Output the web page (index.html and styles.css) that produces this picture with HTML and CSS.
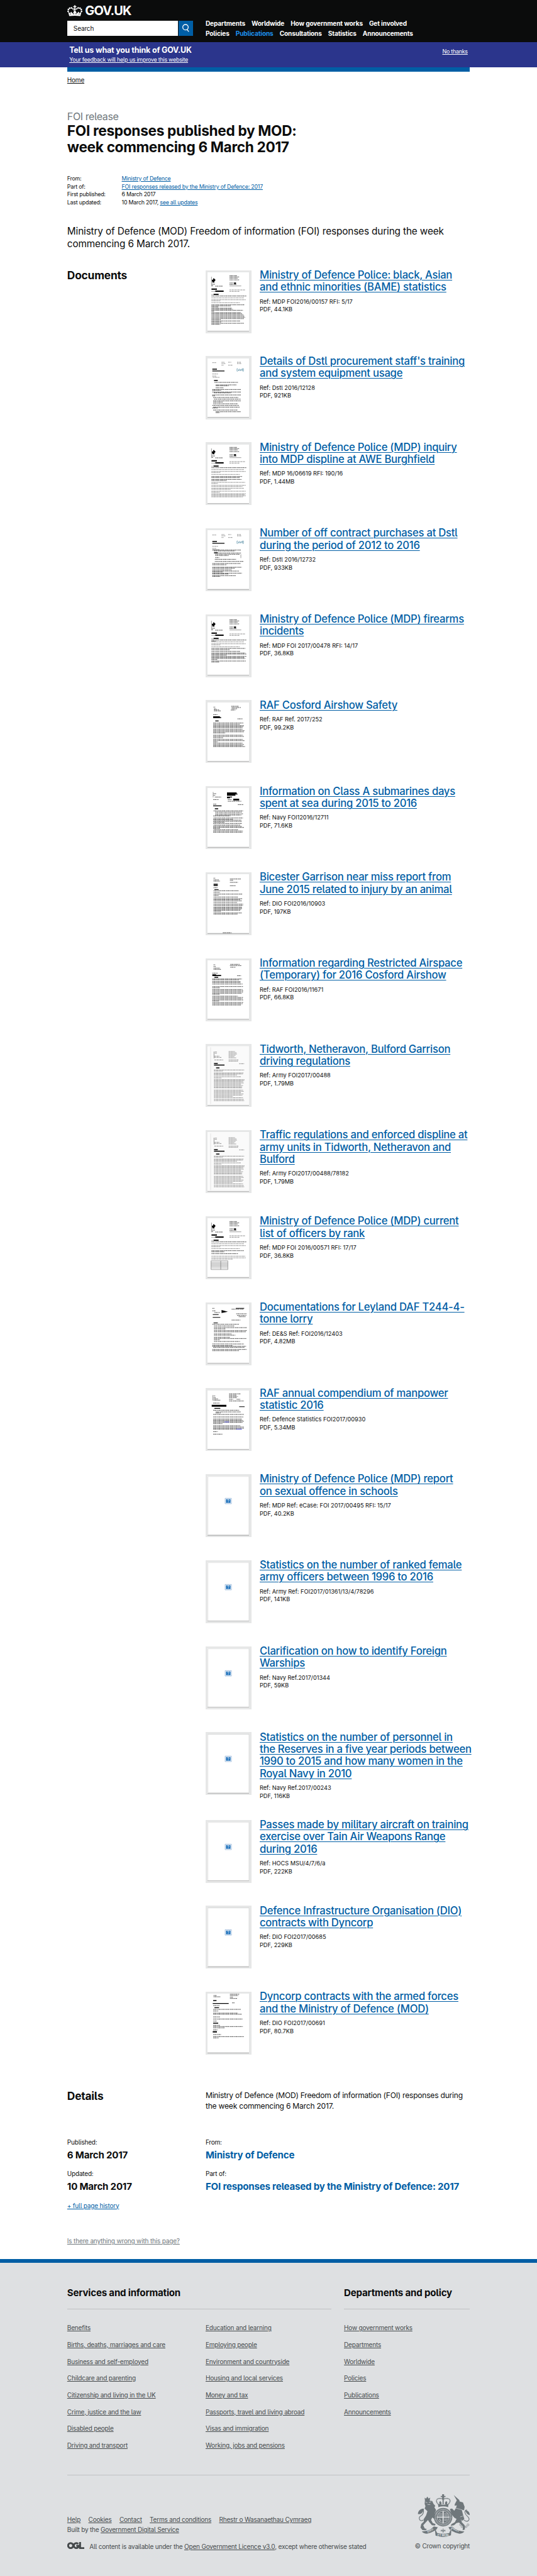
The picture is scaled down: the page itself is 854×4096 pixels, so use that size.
FILE: index.html
```html
<!DOCTYPE html>
<html lang="en">
<head>
<meta charset="utf-8">
<title>FOI responses published by MOD: week commencing 6 March 2017 - GOV.UK</title>
<link rel="stylesheet" href="styles.css">
</head>
<body>
<svg class="defs" aria-hidden="true">
  <symbol id="mdp" viewBox="0 0 99 140">
    <path class="line" d="M9 10V33"/>
    <path class="solid" d="M13 14h3v2h2v4h-2v4h-5v-3h-1v-4h3z"/>
    <path class="bold" d="M10 28H17M10 31.5H13M18 32.5H36M52 7.5H70M52 10.5H75M52 13.5H72M52 17.5H75M52 25H67M52 28.500H68"/>
    <path class="line" d="M52 32H80"/>
    <path class="solid" d="M63 24h4.500v3.500h-4.500zM9 38h13v3h-13zM18 43h20v3h-20zM14 51h12v2.500h-12z"/>
    <path class="text" d="M9 45H18M9 52.500H14M52 41.500H89M52 45H76"/>
    <path class="bold" d="M9 56H92"/>
    <path class="text" d="M9 60.500H86M9 65H91M9 67.500H30M9 72H77"/>
  </symbol>
  <symbol id="dstl" viewBox="0 0 99 140">
    <path class="text" d="M11 11H20M33 10H40M33 13H42M49 10H56M70 10H79M70 13H80M33 17H38M49 17H59M11 38H25M11 43H20M12 46H28"/>
    <path class="solid" d="M11 25.500h11v2h-11zM11 30h29v1.600h-29zM15 52.500h9v2h-9z"/>
    <path class="blue" d="M71 25H70V31.500H71M84 25H85V31.500H84M73.500 27.500V30H75V25.500M78 27V30H79M80 26V30M82.500 25V30.500"/>
  </symbol>
  <symbol id="army" viewBox="0 0 99 140">
    <path class="scan" d="M0 0H99V140H0z"/><path class="edge" d="M7 3V138"/>
    <path class="line" d="M15 13V29"/>
    <path class="text" d="M17 14H22M17 17H22M16 24H28M16 27H33M50 13H65M50 16H69M50 19H70M50 22H66M50 25H64M50 28H68M16 33H37M50 33H73M50 36H72M75 42H87"/>
    <path class="solid" d="M15 40.500h9v2h-9zM15 44h25v2.500h-25zM20 51h8v2h-8z"/>
    <path class="text" d="M15 57H87M15 59.500H36M15 64H85M15 66.500H84M15 69H70M15 73H79M15 76H33M15 80H88M15 82.500H87M15 85H84M15 88H86M15 91H80M15 94H84M15 97H82M15 99.500H82M15 105H84M15 108H86M15 111H80M15 114H85M15 117H83M15 120H60M15 123H84M15 127H86M15 130H87"/>
  </symbol>
  <symbol id="missing" viewBox="0 0 99 140">
    <path class="frame" d="M.5 .5H98.500V139.500H.5z"/>
    <path class="icon-edge" d="M41.500 52.500H56.500V65.500H41.500z"/><path class="icon-fill" d="M43.500 54.500H54.500V63.500H43.500z"/>
    <path class="icon-mark" d="M47 57.200C47 55.600 51.200 55.600 51 57.700C50.900 58.800 49 58.800 49 60.200M49 61.300V62.500"/>
  </symbol>
</svg>

<header class="header">
  <div class="wrap">
    <a class="logo">
      <svg class="crown" viewBox="30 24 108 79">
        <path d="M44 102L36 70L50 82L58 70L68 84L78 68V58H74V63H90V58H90V68L100 84L110 70L118 82L132 70L124 102Q84 96 44 102z"/>
        <path class="cut" d="M49 88L54 84L58 90zM119 88L114 84L110 90zM73 78V89H78V80zM95 78V89H90V80z"/>
        <path d="M80 24H88L87 31H95V39H87L88 50H80L81 39H73V31H81z"/>
        <g><circle cx="84" cy="54" r="7"/><circle cx="36" cy="68" r="6"/><circle cx="38" cy="55" r="6"/><circle cx="47" cy="46" r="6"/><circle cx="60" cy="44" r="6"/><circle cx="71" cy="51" r="5"/><circle cx="97" cy="51" r="5"/><circle cx="108" cy="44" r="6"/><circle cx="121" cy="46" r="6"/><circle cx="130" cy="55" r="6"/><circle cx="132" cy="68" r="6"/></g>
      </svg>
      <span>GOV.UK</span>
    </a>
    <div class="header-row">
      <div class="search"><span class="search-box">Search</span><span class="search-button"><svg viewBox="0 0 35 36"><circle cx="16.500" cy="15.500" r="6.500"/><path d="M20 21L24.500 26"/></svg></span></div>
      <nav class="nav">
        <div class="nav-line n1"><a>Departments</a><a>Worldwide</a><a>How government works</a><a>Get involved</a></div>
        <div class="nav-line n2"><a>Policies</a><a class="active">Publications</a><a>Consultations</a><a>Statistics</a><a>Announcements</a></div>
      </nav>
    </div>
  </div>
</header>

<section class="survey">
  <div class="wrap survey-row">
    <div><p class="survey-title">Tell us what you think of GOV.UK</p><a class="survey-link">Your feedback will help us improve this website</a></div>
    <a class="survey-link no-thanks">No thanks</a>
  </div>
</section>

<main class="wrap main">
  <div class="bar"></div>
  <p class="crumb"><a>Home</a></p>
  <p class="kicker">FOI release</p>
  <h1>FOI responses published by MOD:<br>week commencing 6 March 2017</h1>
  <dl class="meta">
    <dt>From:</dt><dd><a>Ministry of Defence</a></dd>
    <dt>Part of:</dt><dd><a>FOI responses released by the Ministry of Defence: 2017</a></dd>
    <dt>First published:</dt><dd>6 March 2017</dd>
    <dt>Last updated:</dt><dd>10 March 2017, <a>see all updates</a></dd>
  </dl>
  <p class="lead">Ministry of Defence (MOD) Freedom of information (FOI) responses during the week<br>commencing 6 March 2017.</p>

  <section class="columns documents">
    <h2>Documents</h2>
    <div>
      <article class="doc">
        <svg class="thumb" viewBox="0 0 99 140"><use href="#mdp"/><path class="bold" d="M9 77H88M9 79.500H55M9 82H25M9 85H57M9 87.500H60M9 90H84M9 92.500H15M9 95.500H80M9 98H82M9 101H85M9 104H88M9 107H89M9 110H86M9 112.500H31M9 115.500H77M9 118H32M9 121H86M9 123.500H30"/></svg>
        <div><h3>Ministry of Defence Police: black, Asian<br>and ethnic minorities (BAME) statistics</h3><p>Ref: MDP FOI2016/00157 RFI: 5/17<br>PDF, 44.1KB</p></div>
      </article>
      <article class="doc">
        <svg class="thumb" viewBox="0 0 99 140"><use href="#dstl"/><path class="bold" d="M16 58H72M19 64H69M19 66H50M19 71H38M11 75H79M11 77H32M11 81H79M15 83H56M11 88H79M11 90H17M13 94H73M15 98H79M13 102H79M13 105H36M13 109H72M11 113H75M13 117H76M11 119H24M13 124H71M19 128H79M19 130H29"/></svg>
        <div><h3>Details of Dstl procurement staff's training<br>and system equipment usage</h3><p>Ref: Dstl 2016/12128<br>PDF, 921KB</p></div>
      </article>
      <article class="doc">
        <svg class="thumb" viewBox="0 0 99 140"><use href="#mdp"/><path class="bold" d="M9 77H82M9 79.500H76M9 84H81M9 86.500H45"/><path class="text" d="M9 91H90M9 93.500H24M9 98H91M9 101H83M9 105H86M9 107.500H55M9 112H91M9 114.500H29M9 118H91M9 120.500H89M9 123H91M9 125.500H84"/></svg>
        <div><h3>Ministry of Defence Police (MDP) inquiry<br>into MDP displine at AWE Burghfield</h3><p>Ref: MDP 16/06619 RFI: 190/16<br>PDF, 1.44MB</p></div>
      </article>
      <article class="doc">
        <svg class="thumb" viewBox="0 0 99 140"><use href="#dstl"/><path class="bold" d="M11 47H79M15 49H65M16 54H80M18 57H76M18 60H50M18 65H28M17 69H68M17 74H85M11 79H78M11 82H45M11 88H81M11 90H65M11 94H57M11 97H75M11 99H36M11 102H82M11 104H50M11 108H67M11 109.500H30"/><path class="line" d="M79 57V66"/></svg>
        <div><h3>Number of off contract purchases at Dstl<br>during the period of 2012 to 2016</h3><p>Ref: Dstl 2016/12732<br>PDF, 933KB</p></div>
      </article>
      <article class="doc">
        <svg class="thumb" viewBox="0 0 99 140"><use href="#mdp"/><path class="bold" d="M9 58.500H20M9 76H90M9 79H52M9 83H77M9 87H90M9 89.500H92M9 92H45M9 95H92M9 97.500H88M9 100H90M9 102.500H23M9 106H91M9 108.500H28"/></svg>
        <div><h3>Ministry of Defence Police (MDP) firearms<br>incidents</h3><p>Ref: MDP FOI 2017/00478 RFI: 14/17<br>PDF, 36.8KB</p></div>
      </article>
      <article class="doc">
        <svg class="thumb" viewBox="0 0 99 140"><path class="bold" d="M14 12H18M15 16H20M15 18.500H27M15 21H31M56 10H74M57 13H79M57 16H70M55 19H66M13 30H24M71 40H83M13 50H85M13 53H77M13 56H86M13 58.500H85M13 61H83M13 65H83M13 68H88M13 71H86M13 73.500H42M13 79H84M13 82H86M13 85H37M13 89H84M13 92H88M13 95H24M13 98H83M13 101H86M13 104H84M13 106H89"/><path class="solid" d="M13 34h16v2h3v2h-19zM18 44h8v2h-8z"/></svg>
        <div><h3>RAF Cosford Airshow Safety</h3><p>Ref: RAF Ref. 2017/252<br>PDF, 99.2KB</p></div>
      </article>
      <article class="doc">
        <svg class="thumb" viewBox="0 0 99 140"><path class="line" d="M13 9V22"/><path class="solid" d="M46 10h23v3h2v2h-5v3h-20zM46 20h12v2h-5v2h-7zM61 25h14v4h-14zM13 41h20v1.800h-20zM17 48h8v2h-8z"/><path class="bold" d="M14 13H20M14 17H18M17 21H32M13 27H26M48 27H58M48 31H80M72 39H85M13 38H21M14 54H85M18 57H81M18 61H84M18 64H80M13 66H54M14 71H84M13 74H60M14 76H80M13 79H81M14 81H40M13 84H82M14 88H78M13 91H82M13 93.500H87M13 96H29M14 99H73M13 102H84M13 105H83"/></svg>
        <div><h3>Information on Class A submarines days<br>spent at sea during 2015 to 2016</h3><p>Ref: Navy FOI12016/12711<br>PDF, 71.6KB</p></div>
      </article>
      <article class="doc">
        <svg class="thumb" viewBox="0 0 99 140"><path class="solid" d="M14 22.500h10v2h-10zM14 25.500h10v2h-10zM16 35.500h10v1.500h-10z"/><path class="bold" d="M14 9H18M14 13H27M14 16H29M53 11H79M53 14H61M53 19H72M53 27H67M14 32H24M14 39H74M14 43H29M14 47H83M14 50H26M14 54H72M14 58H83M14 60H77M14 63H81M14 67H70M14 71H85M14 74H84M14 78H81M14 80.500H82M14 83H80M14 85.500H78M14 88H32M14 92H81M14 94.500H71M36 139H57"/></svg>
        <div><h3>Bicester Garrison near miss report from<br>June 2015 related to injury by an animal</h3><p>Ref: DIO FOI2016/10903<br>PDF, 197KB</p></div>
      </article>
      <article class="doc">
        <svg class="thumb" viewBox="0 0 99 140"><path class="solid" d="M11 33h9v1.500h12v2.500h-21zM16 39h9v2h-9z"/><path class="bold" d="M14 10H18M14 14H19M14 18H29M14 21H32M54 9H76M53 12H80M54 16H66M11 30H24M70 36H80M11 44H82M11 46H75M11 50H78M11 52.500H78M11 56H83M11 62H84M11 65H29M11 69H83M11 72H85M11 75H84M11 78H82M11 80.500H28M11 85H72M11 88H84M11 91H83M11 94H85M11 96.500H27M11 100H85M11 103H83M11 106H80"/></svg>
        <div><h3>Information regarding Restricted Airspace<br>(Temporary) for 2016 Cosford Airshow</h3><p>Ref: RAF FOI2016/11671<br>PDF, 66.8KB</p></div>
      </article>
      <article class="doc">
        <svg class="thumb" viewBox="0 0 99 140"><use href="#army"/></svg>
        <div><h3>Tidworth, Netheravon, Bulford Garrison<br>driving regulations</h3><p>Ref: Army FOI2017/00488<br>PDF, 1.79MB</p></div>
      </article>
      <article class="doc">
        <svg class="thumb" viewBox="0 0 99 140"><use href="#army"/></svg>
        <div><h3>Traffic regulations and enforced displine at<br>army units in Tidworth, Netheravon and<br>Bulford</h3><p>Ref: Army FOI2017/00488/78182<br>PDF, 1.79MB</p></div>
      </article>
      <article class="doc">
        <svg class="thumb" viewBox="0 0 99 140"><use href="#mdp"/><path class="bold" d="M9 77H86M9 79.500H40M9 84H72"/><path class="text" d="M9 90H90M9 94H91M9 97H60"/><path class="grid" d="M8 101H48V122H8zM31 101V122M8 104.500H48M8 108H48M8 111H48M8 114H48M8 118H48"/></svg>
        <div><h3>Ministry of Defence Police (MDP) current<br>list of officers by rank</h3><p>Ref: MDP FOI 2016/00571 RFI: 17/17<br>PDF, 36.8KB</p></div>
      </article>
      <article class="doc">
        <svg class="thumb" viewBox="0 0 99 140"><path class="solid" d="M33 13L48 17L33 20zM67 8h20v1.500h-20zM12 23h14v1.500h-14zM12 30h18v1.500h-18zM14 43h10v1.300h-10z"/><path class="bold" d="M11 9H16M11 15H19M16 19H29M57 11H86M68 22H93M70 26H92M74 29H90M57 37H78M11 47H75M15 51H64M15 55H93M15 58H42M15 62H93M15 65H91M15 70H57M15 73H66M15 78H53M15 81H92M15 84H29M15 88H77M11 94H86M11 98H60M11 99.500H92M13 102H88M11 107H93M11 110H75"/></svg>
        <div><h3>Documentations for Leyland DAF T244-4-<br>tonne lorry</h3><p>Ref: DE&amp;S Ref: FOI2016/12403<br>PDF, 4.82MB</p></div>
      </article>
      <article class="doc">
        <svg class="thumb" viewBox="0 0 99 140"><path class="line" d="M12 12V25"/><path class="solid" d="M9.500 35h35v4.500h-35zM16 42.500h14v2h-14zM75 39h13v1.500h-13z"/><path class="bold" d="M14 14H18M14 18H19M14 21H25M14 24H30M51 9H78M51 12H69M51 15H72M51 18H70M51 22H61M69 22H78M51 26H86M13 31H28M13 48H75M19 52H79M19 54.500H31M13 58H86M13 64H85M13 69H81M13 72H84M13 74.500H86M13 77H83M13 80H35M13 85H78M13 88H86M13 91H87M13 93H80M13 99H24M13 105H35"/><path class="link-line" d="M40 76H51M68 93H82"/></svg>
        <div><h3>RAF annual compendium of manpower<br>statistic 2016</h3><p>Ref: Defence Statistics FOI2017/00930<br>PDF, 5.34MB</p></div>
      </article>
      <article class="doc">
        <svg class="thumb" viewBox="0 0 99 140"><use href="#missing"/></svg>
        <div><h3>Ministry of Defence Police (MDP) report<br>on sexual offence in schools</h3><p>Ref: MDP Ref: eCase: FOI 2017/00495 RFI: 15/17<br>PDF, 40.2KB</p></div>
      </article>
      <article class="doc">
        <svg class="thumb" viewBox="0 0 99 140"><use href="#missing"/></svg>
        <div><h3>Statistics on the number of ranked female<br>army officers between 1996 to 2016</h3><p>Ref: Army Ref: FOI2017/01361/13/4/78296<br>PDF, 141KB</p></div>
      </article>
      <article class="doc">
        <svg class="thumb" viewBox="0 0 99 140"><use href="#missing"/></svg>
        <div><h3>Clarification on how to identify Foreign<br>Warships</h3><p>Ref: Navy Ref.2017/01344<br>PDF, 59KB</p></div>
      </article>
      <article class="doc tall">
        <svg class="thumb" viewBox="0 0 99 140"><use href="#missing"/></svg>
        <div><h3>Statistics on the number of personnel in<br>the Reserves in a five year periods between<br>1990 to 2015 and how many women in the<br>Royal Navy in 2010</h3><p>Ref: Navy Ref.2017/00243<br>PDF, 116KB</p></div>
      </article>
      <article class="doc">
        <svg class="thumb" viewBox="0 0 99 140"><use href="#missing"/></svg>
        <div><h3>Passes made by military aircraft on training<br>exercise over Tain Air Weapons Range<br>during 2016</h3><p>Ref: HOCS MSU/4/7/6/a<br>PDF, 222KB</p></div>
      </article>
      <article class="doc">
        <svg class="thumb" viewBox="0 0 99 140"><use href="#missing"/></svg>
        <div><h3>Defence Infrastructure Organisation (DIO)<br>contracts with Dyncorp</h3><p>Ref: DIO FOI2017/00685<br>PDF, 229KB</p></div>
      </article>
      <article class="doc">
        <svg class="thumb" viewBox="0 0 99 140"><path class="solid" d="M13 15h8v2h-8zM12 22h38v2h-38zM16 32h11v2h-11zM13 69h12v2h-12zM12 89h10v3h-10z"/><path class="bold" d="M14 4H21M14 7H30M53 1H75M53 4H73M53 8H60M53 11H70M58 21.500H64M13 28H28M13 37H79M13 41H25M13 46H72M13 48.500H81M13 55H29M13 60H83M13 65H22M13 75H29M13 78H84M13 81H40M13 86H24M13 97H32M13 102H86M13 105H26"/></svg>
        <div><h3>Dyncorp contracts with the armed forces<br>and the Ministry of Defence (MOD)</h3><p>Ref: DIO FOI2017/00691<br>PDF, 80.7KB</p></div>
      </article>
    </div>
  </section>

  <section class="columns details">
    <h2>Details</h2>
    <p class="body">Ministry of Defence (MOD) Freedom of information (FOI) responses during<br>the week commencing 6 March 2017.</p>
  </section>

  <section class="facts">
    <div class="fact"><p>Published:</p><strong>6 March 2017</strong></div>
    <div class="fact"><p>From:</p><strong><a>Ministry of Defence</a></strong></div>
    <div class="fact"><p>Updated:</p><strong>10 March 2017</strong></div>
    <div class="fact"><p>Part of:</p><strong><a>FOI responses released by the Ministry of Defence: 2017</a></strong></div>
  </section>
  <p class="history"><a>+ full page history</a></p>
  <p class="report"><a>Is there anything wrong with this page?</a></p>
</main>

<footer class="footer">
  <div class="wrap">
    <div class="footer-top">
      <section>
        <h2>Services and information</h2>
        <div class="footer-links two">
          <ul><li><a>Benefits</a></li><li><a>Births, deaths, marriages and care</a></li><li><a>Business and self-employed</a></li><li><a>Childcare and parenting</a></li><li><a>Citizenship and living in the UK</a></li><li><a>Crime, justice and the law</a></li><li><a>Disabled people</a></li><li><a>Driving and transport</a></li></ul>
          <ul><li><a>Education and learning</a></li><li><a>Employing people</a></li><li><a>Environment and countryside</a></li><li><a>Housing and local services</a></li><li><a>Money and tax</a></li><li><a>Passports, travel and living abroad</a></li><li><a>Visas and immigration</a></li><li><a>Working, jobs and pensions</a></li></ul>
        </div>
      </section>
      <section>
        <h2>Departments and policy</h2>
        <div class="footer-links">
          <ul><li><a>How government works</a></li><li><a>Departments</a></li><li><a>Worldwide</a></li><li><a>Policies</a></li><li><a>Publications</a></li><li><a>Announcements</a></li></ul>
        </div>
      </section>
    </div>
    <div class="footer-bottom">
      <div>
        <div class="legal"><a>Help</a><a>Cookies</a><a>Contact</a><a>Terms and conditions</a><a>Rhestr o Wasanaethau Cymraeg</a></div>
        <p>Built by the <a>Government Digital Service</a></p>
        <div class="licence">
          <svg class="ogl" viewBox="0 0 41 17"><circle cx="8" cy="8.500" r="6"/><path d="M26 4.500A6 6 0 1 0 26 12.500V9H21.500M30.500 0V14.500H41"/></svg>
          <p>All content is available under the <a>Open Government Licence v3.0</a>, except where otherwise stated</p>
        </div>
      </div>
      <div class="crown-copyright">
        <svg class="crest" viewBox="165 78 375 306">
          <path d="M218 122L216 103L226 110L235 95L245 110L256 102L252 124L270 126L280 148L292 160L286 172L298 190L288 214L286 236L302 250L286 256L270 244L262 262L274 284L294 292L290 302L268 300L248 276L240 262L222 282L206 300L216 322L232 328L222 336L200 334L186 316L192 290L210 274L208 258L226 230L236 200L216 180L222 164L216 148z"/>
          <path class="stroke" d="M206 262C178 280 168 244 190 232C212 218 214 186 196 184"/><path d="M212 182C188 178 168 196 168 220C192 224 204 206 206 196z"/>
          <path d="M424 84L464 120L466 130L490 136L502 168L498 192L482 190L492 230L500 256L478 274L502 300L504 330L488 336L490 308L462 280L444 284L426 300L402 304L408 292L432 278L444 254L428 246L410 224L396 184L412 180L428 196L440 176L446 158L430 160L432 148L446 122z"/>
          <path class="stroke" d="M496 262C528 286 546 256 522 236C502 220 496 194 518 190"/><path d="M508 196C524 190 538 206 539 228C520 222 514 214 508 196z"/>
          <g class="chain"><circle cx="472" cy="296" r="6"/><circle cx="482" cy="310" r="6"/><circle cx="500" cy="312" r="6"/><circle cx="513" cy="310" r="6"/><circle cx="526" cy="297" r="7"/></g>
          <path class="light" d="M222 134L236 140M246 138L262 132M236 152L256 152M440 178L486 190M470 240L490 234M474 262L486 266"/>
          <circle cx="348" cy="242" r="66"/><circle class="garter" cx="348" cy="242" r="43"/>
          <circle class="beads" cx="348" cy="242" r="55"/>
          <path class="light-thick" d="M304 242H392M348 198V286"/>
          <path class="light" d="M314 218H342M312 228H342M356 218H382M356 228H384M356 256H382M356 266H376M320 256L338 272M326 252V276"/>
          <path d="M312 148L314 170Q348 160 384 170L386 148Q348 158 312 148zM341 78H355V90H365V98H355V110H341V98H331V90H341zM344 110H352V150H344zM322 150L320 134L328 126L336 138V150zM376 150L378 134L370 126L362 138V150z"/>
          <path class="dots" d="M316 152C286 124 306 106 326 108C340 108 346 114 348 118C350 114 358 108 370 108C394 106 412 124 382 152"/>
          <path d="M196 344Q248 342 282 308L310 314Q300 344 232 360Q208 358 196 344zM500 344Q448 342 414 308L386 314Q396 344 464 360Q488 358 500 344zM288 320L298 340L306 356Q348 364 392 356L398 340L408 320L404 372Q348 394 294 374z"/>
          <path class="stroke" d="M348 324V352M336 344C330 332 340 330 346 344M360 344C366 332 356 330 350 344"/>
          <text class="motto" x="348" y="379" text-anchor="middle">ET MON</text>
          <text class="motto" transform="translate(238 354) rotate(-28)">DIEU</text>
          <text class="motto" transform="translate(405 322) rotate(28)">DROIT</text>
        </svg>
        <p>© Crown copyright</p>
      </div>
    </div>
  </div>
</footer>
</body>
</html>
```
FILE: styles.css
```css
/* 1rem is one hundred design units */
html { font-size: 66.7px; }
* { box-sizing: border-box; margin: 0; padding: 0; }
body { font-family: Inter, "Liberation Sans", sans-serif; font-size: .16rem; color: #0b0c0c; background: #fff; font-feature-settings: "cv05"; white-space: nowrap; overflow-x: hidden; }
a { text-decoration-line: underline; text-decoration-thickness: 1px; text-underline-offset: .02rem; }
ul { list-style: none; }
h1, h2, h3 { font-weight: 700; }
.defs { display: none; }
.wrap { width: 9.6rem; margin: 0 auto; }

.header { height: 1.01rem; background: #0b0c0c; padding-top: .11rem; color: #fff; }
.header a, .facts a { text-decoration: none; }
.logo { display: flex; height: .3rem; font-size: .3rem; line-height: .3rem; font-weight: 700; gap: .065rem; letter-spacing: -.012rem; }
.crown { flex: none; width: .36rem; height: .27rem; fill: #fff; margin-top: .01rem; }
.crown .cut { fill: #0b0c0c; }
.header-row { display: flex; gap: .3rem; }
.search { display: flex; gap: .01rem; margin-top: .08rem; height: .37rem; }
.search-box { width: 2.64rem; background: #fff; color: #0b0c0c; padding-left: .15rem; line-height: .36rem; font-size: .15rem; letter-spacing: -.002rem; }
.search-button { width: .35rem; background: #005ea5; }
.search-button svg { display: block; width: .35rem; height: .36rem; fill: none; stroke: #fff; stroke-width: 2; }
.nav { margin-top: .024rem; font-weight: 700; font-size: .152rem; line-height: .24rem; letter-spacing: -.0022rem; }
.nav-line { display: flex; gap: .15rem; }
.active { color: #1d8feb; }

.survey { height: .6rem; background: #2b358c; color: #fff; padding-top: .085rem; }
.survey-row { display: flex; justify-content: space-between; padding: 0 .05rem; }
.survey-title { font-size: .187rem; font-weight: 700; line-height: .2rem; margin-bottom: .025rem; letter-spacing: -.0025rem; }
.survey-link { display: block; font-size: .134rem; line-height: .2rem; letter-spacing: -.0038rem; }
.no-thanks { margin-top: .025rem; }

.bar { height: .1rem; background: #005ea5; }
.crumb { padding-top: .1rem; line-height: .2rem; font-size: .15rem; letter-spacing: -.003rem; }
.kicker { margin-top: .62rem; font-size: .24rem; line-height: .3rem; color: #6f777b; letter-spacing: -.006rem; }
h1 { font-size: .34rem; line-height: .387rem; letter-spacing: -.005rem; }
.meta { margin-top: .465rem; display: grid; grid-template-columns: 1.3rem 1fr; grid-auto-rows: .19rem; line-height: .19rem; font-size: .132rem; letter-spacing: -.003rem; }
.meta a, .doc h3, .facts a, .history { color: #005ea5; }
.lead { margin-top: .44rem; font-size: .23rem; line-height: .3rem; letter-spacing: -.002rem; }
.columns { display: grid; grid-template-columns: 3.3rem 1fr; }
.columns h2 { font-size: .26rem; line-height: .29rem; margin-top: -.02rem; letter-spacing: -.003rem; }
.documents { margin-top: .475rem; }
.doc { display: flex; gap: .2rem; height: 2.05rem; align-items: flex-start; }
.doc.tall { height: 2.09rem; }
.thumb { flex: none; width: 1.09rem; height: 1.5rem; padding: .05rem; background-color: #e6e7e7; overflow: visible; background-image: linear-gradient(#fff, #fff), linear-gradient(#aaa, #ccc); background-size: .99rem 1.4rem, .99rem .02rem; background-position: .05rem .05rem, .05rem 1.45rem; background-repeat: no-repeat; }
.doc h3 { margin-top: -.025rem; font-size: .25rem; line-height: .29rem; font-weight: 500; letter-spacing: -.004rem; text-decoration: underline; text-decoration-thickness: 1px; text-underline-offset: .03rem; }
.doc p { margin-top: .105rem; font-size: .138rem; line-height: .19rem; }

.text, .bold, .line, .blue, .grid, .frame, .edge, .link-line { fill: none; }
.text { stroke: #555; stroke-width: 1; stroke-dasharray: 3 .8 1.4 .6 4 1 2 .7; }
.bold { stroke: #222; stroke-width: 1.2; stroke-dasharray: 2.600 .7 4 .9 1.300 .6; }
.solid { fill: #000; }
.line { stroke: #444; stroke-width: .8; }
.grid { stroke: #555; stroke-width: .8; }
.blue { stroke: #2a6f8e; stroke-width: 1; }
.scan { fill: #fafafa; }
.edge { stroke: #e4e4e4; stroke-width: 1.500; }
.frame { stroke: #ccc; stroke-width: 1; }
.link-line { stroke: #33f; stroke-width: 1; }
.icon-edge { fill: #fff; stroke: #7ba3d0; stroke-width: 1; }
.icon-fill { fill: #2475bd; }
.icon-mark { fill: none; stroke: #fff; stroke-width: 1.300; }

.details { margin-top: .3rem; }
.body { font-size: .181rem; line-height: .25rem; letter-spacing: -.0033rem; }
.facts { margin-top: .645rem; display: grid; grid-template-columns: 3.3rem 1fr; row-gap: .2rem; }
.fact { height: .55rem; }
.fact p { font-size: .15rem; line-height: .2rem; margin-bottom: .05rem; letter-spacing: -.003rem; }
.fact strong { display: block; font-size: .226rem; line-height: .3rem; letter-spacing: -.003rem; }
.history { margin-top: .205rem; font-size: .15rem; line-height: .2rem; letter-spacing: -.003rem; }
.report { margin-top: .65rem; font-size: .15rem; line-height: .2rem; color: #6f777b; letter-spacing: -.0025rem; }

.footer { margin-top: .32rem; border-top: .1rem solid #005ea5; height: 7.57rem; background: #dee0e2; padding-top: .573rem; color: #454a4c; font-size: .15rem; letter-spacing: -.0028rem; }
.footer-top { display: grid; grid-template-columns: 6.3rem 3rem; gap: .3rem; height: 4.5rem; border-bottom: 1px solid #bfc1c3; }
.footer h2 { font-size: .226rem; line-height: .3rem; color: #0b0c0c; padding-bottom: .225rem; border-bottom: 1px solid #bfc1c3; }
.footer-links { margin-top: .24rem; line-height: .4rem; }
.two { display: grid; grid-template-columns: 3.3rem 1fr; }
.footer-bottom { display: flex; justify-content: space-between; padding-top: .45rem; line-height: .24rem; }
.legal { display: flex; gap: .185rem; margin-top: .48rem; }
.licence { display: flex; gap: .12rem; margin-top: .16rem; }
.ogl { width: .41rem; height: .17rem; margin-top: .015rem; fill: none; stroke: #454a4c; stroke-width: 4.500; }
.crown-copyright { display: flex; flex-direction: column; align-items: flex-end; }
.crest { width: 1.25rem; height: 1.02rem; fill: #6f777b; margin-bottom: .09rem; }
.crest .stroke, .crest .chain, .crest .dots { fill: none; stroke: #6f777b; stroke-width: 5; }
.crest .chain { stroke-width: 3; }
.crest .dots { stroke-width: 7; stroke-dasharray: 6 2; }
.crest .light { fill: none; stroke: #dee0e2; stroke-width: 3; }
.crest .light-thick { fill: none; stroke: #dee0e2; stroke-width: 8; }
.crest .garter { stroke: #dee0e2; stroke-width: 3; }
.crest .beads { fill: none; stroke: #dee0e2; stroke-width: 11; stroke-dasharray: 3 6; }
.motto { fill: #dee0e2; font-size: 20px; font-weight: 700; letter-spacing: 0; }
```
